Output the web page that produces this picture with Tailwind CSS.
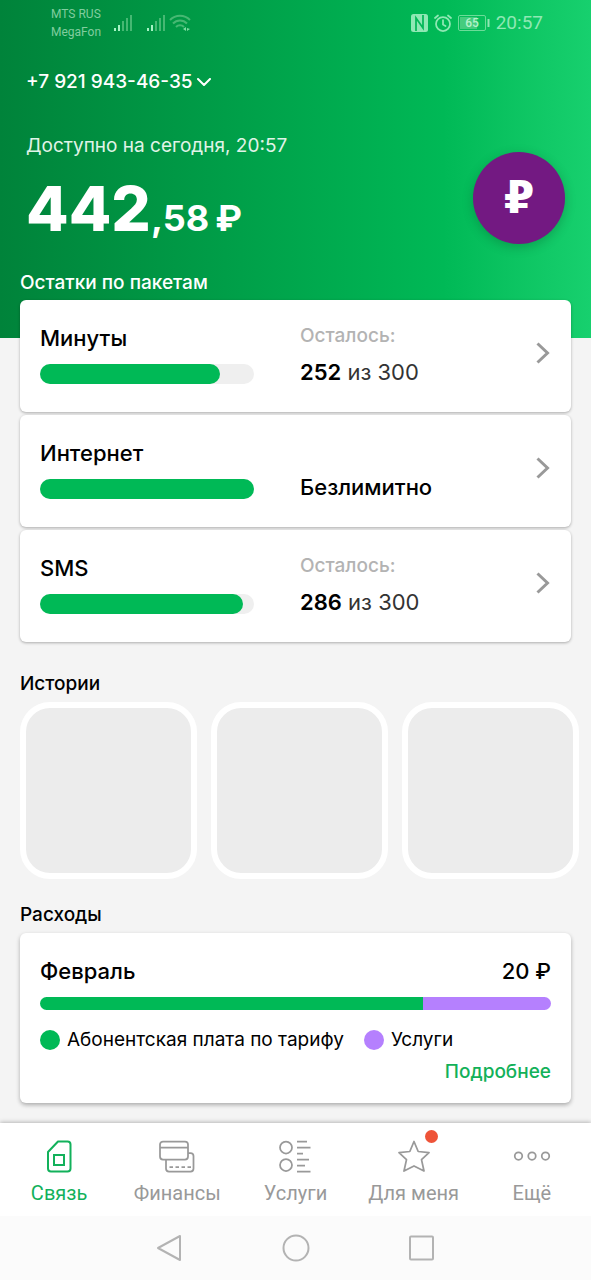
<!DOCTYPE html>
<html lang="ru">
<head>
<meta charset="utf-8">
<meta name="viewport" content="width=device-width, initial-scale=1">
<title>МегаФон</title>
<script src="https://cdn.jsdelivr.net/npm/@tailwindcss/browser@4"></script>
</head>
<body class="flex min-h-screen flex-col bg-[#f4f4f4] font-['Inter',sans-serif] text-black">

<header class="bg-linear-to-r from-[#00833a] via-[#00b956] via-75% to-[#17d06e] pb-[42px] text-white">
  <!-- Status bar -->
  <div class="flex h-[46px] items-center justify-between pr-12 pl-[51px] font-['Roboto',sans-serif] text-[#8fe0b0]">
    <div class="flex items-center">
      <div class="w-[62px] text-[12px] leading-[18px] text-[#80cd9f]"><div>MTS RUS</div><div>MegaFon</div></div>
      <svg class="h-[18px] w-[78px]" viewBox="0 0 78 18" fill="none" aria-label="Сигнал сети">
        <g fill="#a6f3c4"><path d="M1 14h2v3H1zM5 11h2v6H5zM34 14h2v3h-2zM38 11h2v6h-2z"/></g>
        <g fill="#46b873"><path d="M9 7h2v10H9zM13 4h2v13h-2zM17 1h2v16h-2zM42 7h2v10h-2zM46 4h2v13h-2zM50 1h2v16h-2z"/></g>
        <g stroke="#46b873" stroke-width="2"><path d="M57 6a14 14 0 0 1 20 0M60 9.500a9.500 9.500 0 0 1 14 0M63 13a5.500 5.500 0 0 1 8 0"/></g>
        <path d="M70 15l3-2v4zM74 14l3 1-3 2z" fill="#7fdca2"/>
      </svg>
    </div>
    <div class="flex items-center gap-[6px]">
      <svg class="h-[18px] w-[17px]" viewBox="0 0 17 18" aria-label="NFC"><rect width="17" height="18" rx="2.500" fill="#8fe8b4"/><path d="M5 17V4l7 10V1" fill="none" stroke="#04b858" stroke-width="1.750"/></svg>
      <svg class="h-[18px] w-[18px]" viewBox="0 0 18 18" fill="none" stroke="#8fe8b4" stroke-width="1.750" stroke-linecap="round" aria-label="Будильник"><circle cx="9" cy="10" r="7"/><path d="M9 6v4.500l2.500 1.500M1 4l3-2.500M17 4l-3-2.500"/></svg>
      <svg class="h-[16px] w-[32px]" viewBox="0 0 32 16" aria-label="Батарея 65%"><rect x="0.500" y="0.500" width="27" height="15" rx="1.500" fill="none" stroke="#6bdc98"/><path d="M2 2h17v12H2z" fill="#45cc7e"/><path d="M29.500 4h2v8h-2z" fill="#8fe8b4"/><text x="14" y="12" text-anchor="middle" font-family="Roboto" font-size="12" font-weight="500" fill="#b4f3cc">65</text></svg>
      <span class="text-[19px] leading-6 text-[#8fe8b4]">20:57</span>
    </div>
  </div>

  <button type="button" class="mt-[23px] ml-[26px] flex h-[26px] items-center gap-1 text-[19px] leading-[26px] font-medium">
    +7 921 943-46-35
    <svg class="h-2 w-[14px]" viewBox="0 0 14 8" fill="none" stroke="currentColor" stroke-width="2" stroke-linecap="round" stroke-linejoin="round"><path d="M1 1l6 6 6-6"/></svg>
  </button>

  <div class="mt-[38px] flex items-start justify-between pr-[26px] pl-[26px]">
    <div>
      <p class="text-[19px] leading-[26px] text-[#e0f4e8]">Доступно на сегодня, 20:57</p>
      <p class="mt-[14px] flex items-baseline text-[62px] leading-[72px] font-extrabold whitespace-nowrap">442<span class="text-[36px] font-bold">,58</span><span class="ml-[6px] text-[36px] font-bold">₽</span></p>
    </div>
    <button type="button" aria-label="Пополнить счёт" class="mt-[19px] flex size-[92px] items-center justify-center rounded-full bg-[#731982] font-['DejaVu_Sans',sans-serif] text-[44px] leading-none font-bold shadow-[0_3px_12px_rgba(0,0,0,0.2)]">₽</button>
  </div>
  <h2 class="mt-4 px-5 text-[19px] leading-[26px] font-medium">Остатки по пакетам</h2>
</header>

<main class="flex flex-col">
  <section class="-mt-[38px] flex flex-col gap-[3px] px-5">
    <a href="#minutes" class="flex h-[112px] rounded-md bg-white px-5 pt-6 shadow-[0_1px_3px_rgba(0,0,0,0.3)]">
      <div class="w-[260px]">
        <h3 class="text-[22px] leading-[28px] font-medium">Минуты</h3>
        <div class="mt-3 h-5 w-[214px] rounded-full bg-[#efefef]"><div class="h-5 rounded-full bg-[#00b956]" style="width:84%"></div></div>
      </div>
      <div class="flex-1">
        <p class="text-[19px] leading-6 font-medium text-[#b3b3b3]">Осталось:</p>
        <p class="mt-[10px] text-[22px] leading-[28px] text-[#333]"><b class="font-semibold text-black">252</b> из 300</p>
      </div>
      <svg class="mt-[18px] mr-[1px] h-[22px] w-[14px]" viewBox="0 0 14 22" fill="none" stroke="#999" stroke-width="3"><path d="M1.500 1.500 11.500 11 1.500 20.500"/></svg>
    </a>
    <a href="#internet" class="flex h-[112px] rounded-md bg-white px-5 pt-6 shadow-[0_1px_3px_rgba(0,0,0,0.3)]">
      <div class="w-[260px]">
        <h3 class="text-[22px] leading-[28px] font-medium">Интернет</h3>
        <div class="mt-3 h-5 w-[214px] rounded-full bg-[#efefef]"><div class="h-5 rounded-full bg-[#00b956]" style="width:100%"></div></div>
      </div>
      <div class="flex-1 pt-6">
        <p class="mt-[10px] text-[22px] leading-[28px] font-medium">Безлимитно</p>
      </div>
      <svg class="mt-[18px] mr-[1px] h-[22px] w-[14px]" viewBox="0 0 14 22" fill="none" stroke="#999" stroke-width="3"><path d="M1.500 1.500 11.500 11 1.500 20.500"/></svg>
    </a>
    <a href="#sms" class="flex h-[112px] rounded-md bg-white px-5 pt-6 shadow-[0_1px_3px_rgba(0,0,0,0.3)]">
      <div class="w-[260px]">
        <h3 class="text-[22px] leading-[28px] font-medium">SMS</h3>
        <div class="mt-3 h-5 w-[214px] rounded-full bg-[#efefef]"><div class="h-5 rounded-full bg-[#00b956]" style="width:95%"></div></div>
      </div>
      <div class="flex-1">
        <p class="text-[19px] leading-6 font-medium text-[#b3b3b3]">Осталось:</p>
        <p class="mt-[10px] text-[22px] leading-[28px] text-[#333]"><b class="font-semibold text-black">286</b> из 300</p>
      </div>
      <svg class="mt-[18px] mr-[1px] h-[22px] w-[14px]" viewBox="0 0 14 22" fill="none" stroke="#999" stroke-width="3"><path d="M1.500 1.500 11.500 11 1.500 20.500"/></svg>
    </a>
  </section>

  <section class="mt-[29px]">
    <h2 class="px-5 text-[19px] leading-[26px] font-medium">Истории</h2>
    <div class="mt-[5px] flex gap-[14px] overflow-hidden pl-5">
      <button type="button" aria-label="История 1" class="size-[177px] shrink-0 rounded-[30px] border-[6px] border-white bg-[#ececec]"></button>
      <button type="button" aria-label="История 2" class="size-[177px] shrink-0 rounded-[30px] border-[6px] border-white bg-[#ececec]"></button>
      <button type="button" aria-label="История 3" class="size-[177px] shrink-0 rounded-[30px] border-[6px] border-white bg-[#ececec]"></button>
    </div>
  </section>

  <section class="mt-[23px] px-5">
    <h2 class="text-[19px] leading-[26px] font-medium">Расходы</h2>
    <div class="mt-[5px] h-[170px] rounded-md bg-white px-5 pt-6 shadow-[0_2px_4px_rgba(0,0,0,0.3)]">
      <div class="flex justify-between text-[22px] leading-[28px] font-medium"><h3>Февраль</h3><p>20 ₽</p></div>
      <div class="mt-3 flex h-[13px] overflow-hidden rounded-full"><div class="bg-[#00b956]" style="width:75%"></div><div class="flex-1 bg-[#b580fe]"></div></div>
      <div class="mt-[17px] flex gap-5 text-[19px] leading-[26px] whitespace-nowrap">
        <p class="flex items-center gap-[7px]"><span class="size-5 rounded-full bg-[#00b956]"></span>Абонентская плата по тарифу</p>
        <p class="flex items-center gap-[7px]"><span class="size-5 rounded-full bg-[#b580fe]"></span>Услуги</p>
      </div>
      <div class="mt-[6px] text-right text-[19px] leading-[26px] font-medium text-[#12b159]"><a href="#details">Подробнее</a></div>
    </div>
  </section>
</main>

<footer class="mt-auto">
  <nav class="grid h-[93px] grid-cols-5 bg-white pt-[14px] font-['Roboto',sans-serif] text-[20px] leading-[26px] text-[#999] shadow-[0_-1px_4px_rgba(0,0,0,0.25)]">
    <a href="#connect" class="flex flex-col items-center gap-[3px] text-[#12b15b]">
      <svg class="h-10 w-10" viewBox="0 0 40 40" fill="none" stroke="currentColor" stroke-width="2" stroke-linejoin="round"><path d="M19 4.500h9.500a3 3 0 0 1 3 3v24a3 3 0 0 1-3 3H12a3 3 0 0 1-3-3V15z"/><path d="M15 18h10v10H15z" stroke-linejoin="miter"/></svg>
      Связь</a>
    <a href="#finance" class="flex flex-col items-center gap-[3px]">
      <svg class="h-10 w-10" viewBox="0 0 40 40" fill="none" stroke="currentColor" stroke-width="1.750"><rect x="3" y="4.500" width="28" height="18" rx="3"/><path d="M3 10.500h28M31 16h2.500a3 3 0 0 1 3 3v12.500a3 3 0 0 1-3 3H12a3 3 0 0 1-3-3v-9"/><path d="M12.500 30h3.500M18.500 30H22M24.500 30H28M30.500 30H34"/></svg>
      Финансы</a>
    <a href="#services" class="flex flex-col items-center gap-[3px]">
      <svg class="h-10 w-10" viewBox="0 0 40 40" fill="none" stroke="currentColor" stroke-width="1.750"><circle cx="11" cy="10.500" r="6"/><circle cx="11" cy="28" r="6"/><path d="M22 4.500h10M22 10.500h13.500M22 16.500h6M22 22.500h12M22 28.500h8M22 34.500h13.500"/></svg>
      Услуги</a>
    <a href="#for-me" class="flex flex-col items-center gap-[3px] whitespace-nowrap">
      <span class="relative"><svg class="h-10 w-10" viewBox="0 0 40 40" fill="none" stroke="currentColor" stroke-width="1.750" stroke-linejoin="round"><path d="M20 4.500 24.200 14.500 35 15.600 27.500 22.600 30 34 20 29 10 34 12.500 22.600 5 15.600 15.800 14.500z"/></svg><span class="absolute -top-[7px] left-[31px] size-[13px] rounded-full bg-[#ee5338]"></span></span>
      Для меня</a>
    <a href="#more" class="flex flex-col items-center gap-[3px]">
      <svg class="h-10 w-10" viewBox="0 0 40 40" fill="none" stroke="currentColor" stroke-width="1.750"><circle cx="6.500" cy="19" r="3.750"/><circle cx="20" cy="19" r="3.750"/><circle cx="33.500" cy="19" r="3.750"/></svg>
      Ещё</a>
  </nav>
  <div class="flex h-16 items-center justify-center gap-24 bg-[#fbfbfb] text-[#b3b3b3]">
    <button type="button" aria-label="Назад"><svg class="size-[30px]" viewBox="0 0 30 30" fill="none" stroke="currentColor" stroke-width="2" stroke-linejoin="round"><path d="M25 3v24L3 15z"/></svg></button>
    <button type="button" aria-label="Домой"><svg class="size-[30px]" viewBox="0 0 30 30" fill="none" stroke="currentColor" stroke-width="2"><circle cx="15" cy="15" r="12.500"/></svg></button>
    <button type="button" aria-label="Недавние"><svg class="size-[30px]" viewBox="0 0 30 30" fill="none" stroke="currentColor" stroke-width="2"><rect x="3" y="3.500" width="23" height="23" rx="1"/></svg></button>
  </div>
</footer>
</body>
</html>
